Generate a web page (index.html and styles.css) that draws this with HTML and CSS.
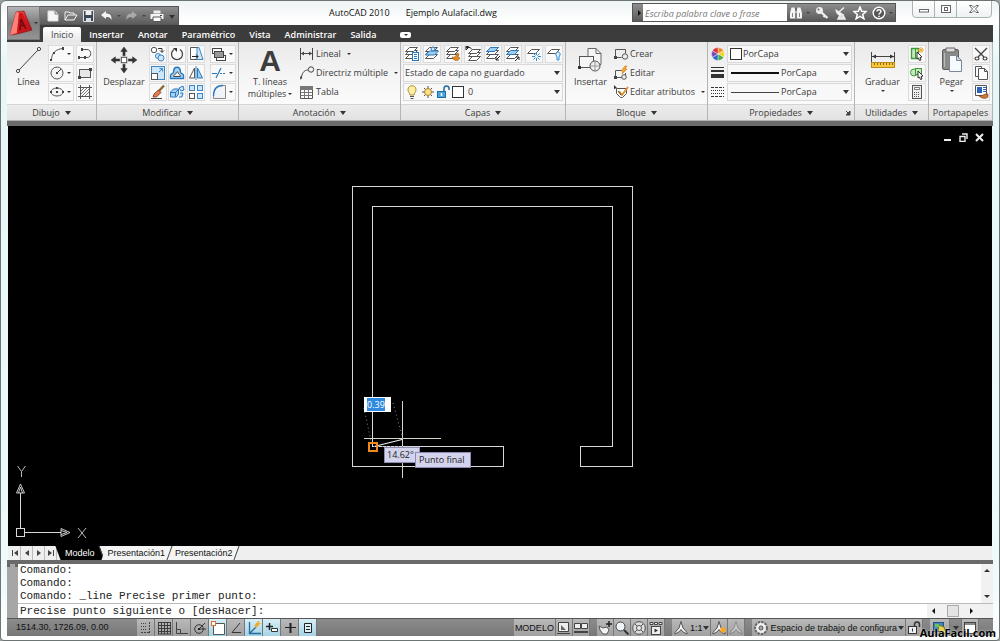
FILE: index.html
```
<!DOCTYPE html>
<html lang="es">
<head>
<meta charset="utf-8">
<title>AutoCAD 2010 - Ejemplo Aulafacil.dwg</title>
<link rel="stylesheet" href="styles.css">
</head>
<body>
<svg class="defs" aria-hidden="true">
  <defs>
    <linearGradient id="red" x1="0" y1="0" x2="1" y2="1"><stop offset="0" stop-color="#ff6a60"/><stop offset=".5" stop-color="#dd2022"/><stop offset="1" stop-color="#9c0c12"/></linearGradient>
    <symbol id="logo" viewBox="0 0 24 28"><path d="M1 26 7 3l8-1 8 19-7 2-8 2z" fill="url(#red)" stroke="#8f1015" stroke-width=".6"/><path d="M7 3l3 1-2 20-7 2z" fill="#ff8178"/><path d="M8 24l2-20 3 0 8 17z" fill="#c9161b"/><path d="M12 10l5 10M12 10l-1 11M11.500 16.500h4" fill="none" stroke="#6b090d" stroke-width="1.500"/></symbol>
    <symbol id="new" viewBox="0 0 14 12"><path d="M2 1h7l3 3v7H2z" fill="#f6f6f6" stroke="#ddd"/><path d="M9 1v3h3" fill="none" stroke="#777"/></symbol>
    <symbol id="open" viewBox="0 0 14 12"><path d="M1 10V2h4l1 1h4v2" fill="none" stroke="#eee"/><path d="M1 10l3-5h9l-3 5z" fill="#777" stroke="#f6f6f6"/></symbol>
    <symbol id="save" viewBox="0 0 14 12"><path d="M1.500.5h10v11h-10z" fill="#3b4656" stroke="#dfe3e8"/><path d="M3.500 1h6v4h-6z" fill="#eee"/><path d="M4 8h5v3H4z" fill="#ddd"/></symbol>
    <symbol id="undo" viewBox="0 0 14 12"><path d="M1 5l5-4v2.500c4 0 6 2 5.500 6.500-1-2.500-2.500-3-5.500-3V9z" fill="#f4f4f4"/></symbol>
    <symbol id="redo" viewBox="0 0 14 12"><path d="M12 5L7 1v2.500C3 3.500 1 5.500 1.500 10 2.500 7.500 4 7 7 7v2z" fill="#aaa"/></symbol>
    <symbol id="print" viewBox="0 0 14 12"><path d="M3.500.5h7v3h-7z" fill="#eee"/><path d="M.5 4h13v5H.5z" fill="#f4f4f4"/><path d="M3 7h8v4.500H3z" fill="#fff" stroke="#555"/><path d="M10 5.500h2" stroke="#444"/></symbol>
    <symbol id="binoc" viewBox="0 0 14 14"><path d="M2.500 1.500h3L6.500 5v7.500H1V7zM8.500 1.500h3L13 7v5.500H7.500V5z" fill="#f4f4f4"/><path d="M3.500 7v4M10.500 7v4" stroke="#888"/><path d="M7 2v10" stroke="#555"/><path d="M6 6h2" stroke="#eee"/></symbol>
    <symbol id="key" viewBox="0 0 14 14"><circle cx="4.500" cy="4.500" r="3.500" fill="#eee"/><circle cx="3.500" cy="3.500" r="1" fill="#666"/><path d="M6 6l6.500 6M10 9.500l-1.500 1.500" stroke="#eee" stroke-width="2.300"/></symbol>
    <symbol id="dish" viewBox="0 0 14 14"><path d="M1.500 3c0 6 4 8 9 6z" fill="#eee"/><path d="M5 6l5-4.500M6 9l-2 4h7L9 9" fill="#ddd" stroke="#eee" stroke-width="1.500"/></symbol>
    <symbol id="star" viewBox="0 0 14 14"><path d="M7 1l1.700 4.200 4.500.3-3.500 2.900 1.200 4.400L7 10.400l-3.900 2.400 1.200-4.400L.8 5.500l4.500-.3z" fill="#777" stroke="#fff" stroke-width="1.500"/></symbol>
    <symbol id="help" viewBox="0 0 14 14"><circle cx="7" cy="7" r="5.800" fill="#555" stroke="#fff" stroke-width="1.400"/><path d="M5 5.500c0-2.500 4-2.500 4 0C9 7 7 7 7 8.500M7 9.700v1.300" fill="none" stroke="#fff" stroke-width="1.500"/></symbol>
    <symbol id="w-min" viewBox="0 0 12 10"><rect x="1.500" y="5.500" width="9" height="2.500" fill="#fff" stroke="#666"/></symbol>
    <symbol id="w-max" viewBox="0 0 12 10"><rect x="1.500" y="1.500" width="9" height="7" fill="#fff" stroke="#666"/><rect x="4.500" y="3.500" width="3" height="3" fill="none" stroke="#666"/></symbol>
    <symbol id="w-close" viewBox="0 0 12 10"><path d="M1.500 1.500h2.500l2 2 2-2h2.500L7.500 5l3 3.500H8l-2-2-2 2H1.500l3-3.500z" fill="#fff" stroke="#666"/></symbol>

    <symbol id="line" viewBox="0 0 28 28"><path d="M4 24L23 4" stroke="#444"/><circle cx="3" cy="25" r="1.600" fill="#fff" stroke="#444"/><circle cx="24" cy="3" r="1.600" fill="#fff" stroke="#444"/></symbol>
    <symbol id="arc" viewBox="0 0 16 16"><path d="M2.500 14C2.500 7 7 3 14 2.500" fill="none" stroke="#555"/><path d="M1 13h2v2H1zM13 1h2v3h-2zM4 6h2v2H4z" fill="#444"/></symbol>
    <symbol id="circle" viewBox="0 0 16 16"><circle cx="8" cy="8" r="6" fill="#f4f4f4" stroke="#555"/><path d="M8 8l4-4" stroke="#333"/><path d="M7 7h2v2H7z" fill="#444"/></symbol>
    <symbol id="ellipse" viewBox="0 0 16 16"><ellipse cx="8" cy="8" rx="6" ry="4" fill="#f4f4f4" stroke="#555"/><path d="M7 7h2v2H7zM1 7h2v2H1zM13 7h2v2h-2zM7 3h2v2H7z" fill="#444"/></symbol>
    <symbol id="pline" viewBox="0 0 16 16"><path d="M4 3.500h6c5 0 5 8 0 8H8M2 11.500h5" fill="none" stroke="#555"/><path d="M4 2h2v3H4zM1 10h2v3H1zM7 10h2v3H7z" fill="#444"/></symbol>
    <symbol id="rect" viewBox="0 0 16 16"><rect x="2.500" y="4.500" width="11" height="8" fill="#e6e6e6" stroke="#555"/><path d="M1 11h3v3H1zM12 3h3v3h-3z" fill="#444"/></symbol>
    <symbol id="hatch" viewBox="0 0 16 16"><path d="M3.500 1v14M12.500 1v14M1 3.500h14M1 12.500h14" stroke="#555"/><path d="M4 7l3-3M4 10l6-6M5 12l7-7M8 12l4-4" stroke="#555" stroke-width=".8"/></symbol>
    <symbol id="move" viewBox="0 0 26 26"><path d="M13 1l3 4h-2v4h-2V5h-2zM13 25l3-4h-2v-4h-2v4h-2zM1 13l4-3v2h4v2H5v2zM25 13l-4-3v2h-4v2h4v2z" fill="#333" stroke="#333" stroke-width=".5"/><rect x="10.500" y="10.500" width="5" height="5" fill="#fff" stroke="#555"/></symbol>
    <symbol id="copy" viewBox="0 0 16 16"><circle cx="4" cy="4" r="2.700" fill="#fff" stroke="#555"/><circle cx="8" cy="10" r="2.500" fill="#cde6fa" stroke="#3b86c4"/><circle cx="11" cy="12" r="3" fill="#cde6fa" stroke="#3b86c4"/><path d="M8 2.500h4V6M10 4.500l2 2 2-2" fill="none" stroke="#333"/></symbol>
    <symbol id="rotate" viewBox="0 0 16 16"><path d="M5 3.500a5.500 5.500 0 1 0 6 0" fill="none" stroke="#444" stroke-width="1.300"/><path d="M4 2h4v4z" fill="#333"/></symbol>
    <symbol id="stretch" viewBox="0 0 16 16"><path d="M2.500 1.500h7v12h-7z" fill="#fff" stroke="#555"/><path d="M9 1.500h2l4 12H9z" fill="#cde6fa" stroke="#3b86c4"/><path d="M4 10.500h6M8 8.500l2 2-2 2" fill="none" stroke="#222"/></symbol>
    <symbol id="offsetc" viewBox="0 0 16 16"><rect x="1.500" y="1.500" width="13" height="13" fill="#cde6fa" stroke="#3b86c4"/><rect x="1.500" y="8.500" width="6" height="6" fill="#fff" stroke="#555"/><path d="M9 7l3-3M9.500 3.500h3v3" fill="none" stroke="#3b86c4"/></symbol>
    <symbol id="offset" viewBox="0 0 16 16"><path d="M1.500 13.500v-3c0-2 3-2 3-3 0-7 7-7 7 0 0 1 3 1 3 3v3z" fill="#a8d2f4" stroke="#2878bd" stroke-width="1.400"/><path d="M4.500 11.500c0-2 2.500-2 2.500-3 0-2 2.500-2 2.500 0 0 1 2 1 2 3z" fill="#fff" stroke="#444"/></symbol>
    <symbol id="mirror" viewBox="0 0 16 16"><path d="M6.500 3v10h-5z" fill="#fff" stroke="#555"/><path d="M9.500 3v10h5z" fill="#a8d2f4" stroke="#2878bd"/><path d="M8 1v14" stroke="#3b86c4"/></symbol>
    <symbol id="erase" viewBox="0 0 16 16"><path d="M14 1.500L8 8" stroke="#8a6a3a" stroke-width="2.500"/><path d="M8.500 6l2.500 2.500L6.500 13H3l1-3z" fill="#e9794f" stroke="#6d3a1c" stroke-width=".8"/><path d="M1 14.500h11" stroke="#444"/></symbol>
    <symbol id="explode" viewBox="0 0 16 16"><path d="M1.500 8l3-3h5v5l-2 3h-6z" fill="#a8d2f4" stroke="#2878bd"/><path d="M1.500 8.500h5v4M6.500 8.500l3-3" fill="none" stroke="#2878bd"/><path d="M10 4l4-2 1 4-3 1zM11 9l3 0-1 4-3 0" fill="#cde6fa" stroke="#2878bd"/></symbol>
    <symbol id="array" viewBox="0 0 16 16"><g stroke="#3b86c4" fill="#cde6fa"><rect x="1.500" y="1.500" width="5" height="5"/><rect x="9.500" y="1.500" width="5" height="5"/><rect x="9.500" y="9.500" width="5" height="5"/></g><rect x="1.500" y="9.500" width="5" height="5" fill="#fff" stroke="#555"/></symbol>
    <symbol id="order" viewBox="0 0 16 16"><g stroke="#444"><rect x="1.500" y="2.500" width="9" height="5" fill="#fff"/><rect x="5.500" y="9.500" width="9" height="5" fill="#fff"/><rect x="3.500" y="5.500" width="9" height="6" fill="#999"/></g></symbol>
    <symbol id="trim" viewBox="0 0 16 16"><path d="M1 8.500h5M5 13l5-10" stroke="#2878bd" stroke-width="1.200"/><path d="M9 8.500h6" stroke="#2878bd" stroke-dasharray="2 1"/></symbol>
    <symbol id="fillet" viewBox="0 0 16 16"><path d="M2.500 14.500V12C2.500 5 6 1.500 11 1.500h3.500v13z" fill="#f0f4f8" stroke="#888"/><path d="M2.500 12C2.500 5 6 1.500 12 1.500" fill="none" stroke="#2878bd" stroke-width="1.300"/></symbol>
    <symbol id="dim" viewBox="0 0 16 16"><path d="M1.500 2v12M13.500 2v12M2 7.500h11" stroke="#444"/><path d="M2 7.500l3-2v4zM13 7.500l-3-2v4z" fill="#444"/></symbol>
    <symbol id="leader" viewBox="0 0 16 16"><path d="M2 14C3 8 5 5 9 5" fill="none" stroke="#444"/><circle cx="12" cy="4.500" r="2.700" fill="none" stroke="#444"/><path d="M1 15l.5-4 2 1z" fill="#444"/></symbol>
    <symbol id="table" viewBox="0 0 16 16"><path d="M1.500 2.500h12v12h-12z" fill="#fff" stroke="#555"/><path d="M1 2h13v4H1z" fill="#777"/><path d="M1.500 8.500h12M1.500 11.500h12M5.500 6v8M9.500 6v8" stroke="#777"/></symbol>
    <symbol id="layers" viewBox="0 0 16 16"><g fill="#fff" stroke="#555"><path d="M1.500 12.500l4-4h8l-4 4z"/><path d="M1.500 8.500l4-4h8l-4 4z"/><path d="M1.500 5.500l4-4h8l-4 4z"/></g></symbol>
    <symbol id="lay1" viewBox="0 0 16 16"><use href="#layers"/><rect x="8.500" y="6.500" width="6" height="8" fill="#fff" stroke="#2878bd"/><path d="M10 8.500h3M10 10.500h3M10 12.500h3" stroke="#2878bd"/></symbol>
    <symbol id="lay2" viewBox="0 0 16 16"><use href="#layers"/><path d="M1.500 9l4-4h9l-4 4z" fill="#9fcdf2" stroke="#2878bd"/><circle cx="9" cy="3" r="2" fill="#cde6fa" stroke="#2878bd"/></symbol>
    <symbol id="lay3" viewBox="0 0 16 16"><use href="#layers"/><path d="M7 11c3 1 4-1 5-4l2 1-1 3 2 1c-1 3-6 4-8-1z" fill="#e08a28" stroke="#9a5510" stroke-width=".6"/></symbol>
    <symbol id="lay4" viewBox="0 0 16 16"><g transform="translate(2 2)"><use href="#layers" width="16" height="16"/></g><path d="M1 1.500h3c2 0 2 1 3 2M1 0v4l3-3z" fill="none" stroke="#222"/></symbol>
    <symbol id="lay5" viewBox="0 0 16 16"><use href="#layers"/><path d="M1.500 5.500l4-4h8l-4 4z" fill="#9fcdf2" stroke="#2878bd"/><path d="M15 10l-4 4M11 11v3h3" fill="none" stroke="#222"/></symbol>
    <symbol id="lay6" viewBox="0 0 16 16"><use href="#layers"/><path d="M1.500 8.500l4-4h8l-4 4z" fill="#9fcdf2" stroke="#2878bd"/><path d="M10 15l4-4M11 11h3v3" fill="none" stroke="#222"/></symbol>
    <symbol id="lay7" viewBox="0 0 16 16"><path d="M1.500 7.500l4-4h8l-4 4z" fill="#fff" stroke="#555"/><path d="M10.500 6v9M6 10.500h9M7.500 7.500l6 6M13.500 7.500l-6 6" stroke="#2f8bd6"/><circle cx="10.500" cy="10.500" r="1.500" fill="#fff"/></symbol>
    <symbol id="lay8" viewBox="0 0 16 16"><path d="M1.500 7.500l4-4h8l-4 4z" fill="#fff" stroke="#555"/><path d="M10 9c-1-4 5-4 4 0l-1 2v3h-2v-3z" fill="#e4f2fd" stroke="#2f8bd6"/></symbol>
    <symbol id="bulb" viewBox="0 0 16 16"><path d="M6 11c0-2-2-2.500-2-5.500 0-5 8-5 8 0C12 8.500 10 9 10 11z" fill="#fdf0a0" stroke="#a88c38"/><path d="M6 12.500h4M6.500 14.500h3" stroke="#555"/></symbol>
    <symbol id="sun" viewBox="0 0 16 16"><path d="M8 2v12M2 8h12M4 4l8 8M12 4l-8 8" stroke="#555"/><circle cx="8" cy="8" r="3.500" fill="#fbe08a" stroke="#a88430"/></symbol>
    <symbol id="lock" viewBox="0 0 16 16"><rect x="1.500" y="7.500" width="8" height="6" fill="#4aa3da" stroke="#1c6ca6"/><path d="M8 7V4.500c0-3.500 5-3.500 5 0V6" fill="none" stroke="#1c6ca6" stroke-width="1.500"/><path d="M5.500 9v3" stroke="#fff" stroke-width="1.500"/></symbol>
    <symbol id="insert" viewBox="0 0 28 28"><path d="M12 10V2.500h8l5 5v11h-4" fill="#f6f6f6" stroke="#666"/><path d="M20 2.500v5h5" fill="none" stroke="#666"/><rect x="3.500" y="10.500" width="14" height="11" fill="#f6f6f6" stroke="#555"/><circle cx="19" cy="20" r="5" fill="#eee" stroke="#555"/><path d="M2 20h3v3H2z" fill="#333"/><path d="M19 16v8M15 20h8" stroke="#999"/></symbol>
    <symbol id="create" viewBox="0 0 16 16"><path d="M2.500 11.500v-8h10v4M2.500 11.500h6" fill="none" stroke="#555"/><circle cx="12" cy="10.500" r="2.700" fill="#eee" stroke="#555"/><path d="M1 10h3v3H1z" fill="#444"/></symbol>
    <symbol id="edit" viewBox="0 0 16 16"><path d="M2.500 12.500v-7h6M2.500 12.500h7M12.500 8v2" fill="none" stroke="#555"/><circle cx="11" cy="12" r="2.300" fill="#eee" stroke="#555"/><path d="M12 1L8 6h2L9 9l5-5h-2l2-3z" fill="#f7a823" stroke="#c76e10" stroke-width=".5"/><path d="M1 11h3v3H1z" fill="#444"/></symbol>
    <symbol id="attr" viewBox="0 0 16 16"><path d="M3.500 4.500h10v5l-4 4h-2l-4-4z" fill="#fff" stroke="#555"/><path d="M1 1v4l3-1z" fill="#333"/><path d="M6 7l3 4 6-8" fill="none" stroke="#e08a28" stroke-width="1.800"/><path d="M5 7l3 4" stroke="#555"/></symbol>
    <symbol id="wheel" viewBox="0 0 16 16"><g stroke="#fff" stroke-width=".4"><path d="M8 8V1.500a6.500 6.500 0 0 1 5.600 3.200z" fill="#f08a24"/><path d="M8 8l5.600-3.300a6.500 6.500 0 0 1 0 6.600z" fill="#f3d52b"/><path d="M8 8l5.600 3.300A6.500 6.500 0 0 1 8 14.500z" fill="#49a84a"/><path d="M8 8v6.500a6.500 6.500 0 0 1-5.600-3.200z" fill="#2b6fc7"/><path d="M8 8l-5.600 3.300a6.500 6.500 0 0 1 0-6.600z" fill="#7a4bb5"/><path d="M8 8L2.400 4.700A6.500 6.500 0 0 1 8 1.500z" fill="#d8343c"/></g></symbol>
    <symbol id="weights" viewBox="0 0 16 16"><path d="M1 2.500h13" stroke="#333"/><path d="M1 6h13" stroke="#333" stroke-width="2"/><path d="M1 11h13" stroke="#333" stroke-width="4"/></symbol>
    <symbol id="types" viewBox="0 0 16 16"><path d="M1 3.500h13M1 12.500h13" stroke="#333" stroke-dasharray="3 1"/><path d="M1 6.500h13M1 9.500h13" stroke="#333" stroke-dasharray="1 1"/></symbol>
    <symbol id="measure" viewBox="0 0 28 28"><path d="M2.500 6v10M25.500 6v10M3 10.500h22" stroke="#444"/><path d="M3 10.500l4-2v4zM25 10.500l-4-2v4z" fill="#333"/><rect x="2.500" y="16.500" width="23" height="5" fill="#f6c83a" stroke="#b98a1e"/><path d="M5.500 17v2M8.500 17v2M11.500 17v2M14.500 17v2M17.500 17v2M20.500 17v2M23.500 17v2" stroke="#8b6510"/></symbol>
    <symbol id="qsel" viewBox="0 0 16 16"><path d="M2.500 2.500h7v10h-7z" fill="#c3e8bc" stroke="#3c9a3c" stroke-width="1.300"/><path d="M6.500 3v9" stroke="#3c9a3c"/><path d="M12 1v6M9 4h6M10 2l4 4M14 2l-4 4" stroke="#f0a830"/><path d="M8 6l5 5-2 .5 1 2.500-1.500.5-1-2.500L8 13z" fill="#fff" stroke="#333"/></symbol>
    <symbol id="gsel" viewBox="0 0 16 16"><circle cx="5" cy="7.500" r="3.500" fill="#c3e8bc" stroke="#3c9a3c"/><rect x="6.500" y="3.500" width="6" height="6" fill="#c3e8bc" stroke="#3c9a3c"/><path d="M9 6l5 5-2 .5 1 2.500-1.500.5-1-2.500L9 13z" fill="#fff" stroke="#333"/></symbol>
    <symbol id="calc" viewBox="0 0 16 16"><rect x="3.500" y="1.500" width="9" height="13" fill="#eee" stroke="#555"/><path d="M5.500 3.500h5v2h-5z" fill="#fff" stroke="#777"/><path d="M5 8.500h6M5 10.500h6M5 12.500h6" stroke="#555" stroke-dasharray="1 1"/></symbol>
    <symbol id="paste" viewBox="0 0 28 28"><rect x="4.500" y="3.500" width="16" height="20" rx="1.500" fill="#8b8b87" stroke="#5d5d5a"/><path d="M8 2h9v4H8z" fill="#ddd" stroke="#666"/><path d="M6.500 7v14" stroke="#bbb"/><path d="M11.500 9.500h7l5 5v11h-12z" fill="#f7fafd" stroke="#7c8794"/><path d="M18.500 9.500v5h5z" fill="#cfdae6" stroke="#7c8794"/></symbol>
    <symbol id="cut" viewBox="0 0 16 16"><path d="M2 2l9 9M14 2L5 11" stroke="#444" stroke-width="1.400"/><ellipse cx="4" cy="12.500" rx="2" ry="1.500" fill="none" stroke="#444" stroke-width="1.200"/><ellipse cx="12" cy="12.500" rx="2" ry="1.500" fill="none" stroke="#444" stroke-width="1.200"/></symbol>
    <symbol id="copyclip" viewBox="0 0 16 16"><path d="M2.500 11.500v-10h6v2" fill="#fff" stroke="#555"/><path d="M2.500 11.500h3" stroke="#555"/><path d="M5.500 3.500h6l3 3v8h-9z" fill="#fff" stroke="#555"/><path d="M11.500 3.500v3h3" fill="none" stroke="#555"/></symbol>
    <symbol id="match" viewBox="0 0 16 16"><path d="M2.500 1.500h11v10h-11z" fill="#fff" stroke="#555"/><path d="M4 3h5v6H4z" fill="#2865b8"/><path d="M10 3.500h3M10 5.500h3M10 7.500h3" stroke="#2865b8"/><path d="M6 12c3 1 5-3 9-2v3c-2 2-6 2-9-1z" fill="#c9763a" stroke="#7d4216" stroke-width=".6"/></symbol>

    <symbol id="s-snap" viewBox="0 0 16 16"><path d="M3 3.500h6M3 6.500h6M3 9.500h6" stroke="#444" stroke-dasharray="1 1"/><path d="M11.500 2v11M3 12.500h9" stroke="#444" stroke-dasharray="2 1"/></symbol>
    <symbol id="s-grid" viewBox="0 0 16 16"><path d="M2.500 2v12M5.500 2v12M8.500 2v12M11.500 2v12M14.500 2v12M2 2.500h13M2 5.500h13M2 8.500h13M2 11.500h13M2 14h13" stroke="#333" stroke-width=".9"/></symbol>
    <symbol id="s-ortho" viewBox="0 0 16 16"><path d="M2.500 2v11.500H14M2.500 9.500h4v4" fill="none" stroke="#444"/></symbol>
    <symbol id="s-polar" viewBox="0 0 16 16"><circle cx="7" cy="9" r="4.300" fill="none" stroke="#333"/><path d="M7 9l6-6M7 9h7" stroke="#333"/><path d="M6 8h2v2H6z" fill="#222"/></symbol>
    <symbol id="s-osnap" viewBox="0 0 16 16"><path d="M3.500 3.500h11v11h-11z" fill="#fff" stroke="#555"/><rect x="1.500" y="1.500" width="4" height="4" fill="#fff" stroke="#e86c30"/></symbol>
    <symbol id="s-otrack" viewBox="0 0 16 16"><path d="M12 3L4 12.500h9" fill="none" stroke="#333"/></symbol>
    <symbol id="s-ducs" viewBox="0 0 16 16"><path d="M3.500 2v11.500H15M4 13l6-6" fill="none" stroke="#276a9c" stroke-width="1.300"/><path d="M12 1L8 6h2l-1 3 6-6h-3l2-2z" fill="#f7a823"/></symbol>
    <symbol id="s-dyn" viewBox="0 0 16 16"><path d="M2 6.500h7M5.500 3v7" stroke="#222" stroke-width="1.500"/><path d="M7.500 8.500h6v3h-6z" fill="#fff" stroke="#333"/></symbol>
    <symbol id="s-lwt" viewBox="0 0 16 16"><path d="M3 7.500h11" stroke="#222"/><path d="M8.500 3v10" stroke="#222" stroke-width="2"/></symbol>
    <symbol id="s-qp" viewBox="0 0 16 16"><path d="M4.500 3.500h7v9h-7z" fill="#dff1f8" stroke="#222"/><path d="M6 6.500h4M6 9.500h4" stroke="#222"/></symbol>
    <symbol id="s-model" viewBox="0 0 16 16"><path d="M2.500 2.500h10v9h-10z" fill="#eee" stroke="#444"/><path d="M5 5v5h5z" fill="#666"/><path d="M1 13.500h13" stroke="#444"/></symbol>
    <symbol id="s-lays" viewBox="0 0 16 16"><path d="M1.500 3.500h6v5h-6zM8.500 3.500h6v5h-6z" fill="#eee" stroke="#444"/><path d="M1 12h14" stroke="#444" stroke-width="2"/></symbol>
    <symbol id="s-pan" viewBox="0 0 16 16"><path d="M2 6l4 2 4-1 2 3-2 4H6L3 10z" fill="#f4f4f4" stroke="#555"/><path d="M12 1v6M9 4h6" stroke="#222" stroke-width="1.500"/></symbol>
    <symbol id="s-zoom" viewBox="0 0 16 16"><circle cx="6.500" cy="6.500" r="4.500" fill="#eef4f8" stroke="#444"/><path d="M10 10l4.500 4.500" stroke="#333" stroke-width="2"/></symbol>
    <symbol id="s-wheel" viewBox="0 0 16 16"><circle cx="8" cy="8" r="6.300" fill="#ddd" stroke="#555"/><circle cx="8" cy="8" r="2.500" fill="#eee" stroke="#555"/><path d="M4 4l2 2M12 4l-2 2M4 12l2-2M12 12l-2-2" stroke="#555"/></symbol>
    <symbol id="s-motion" viewBox="0 0 16 16"><rect x="3.500" y="6.500" width="9" height="8" fill="#eee" stroke="#444"/><path d="M6.500 8.500v4l3.500-2z" fill="#333"/><path d="M2 2.500h3v2H2zM6.500 2.500h3v2h-3zM11 2.500h3v2h-3z" fill="#eee" stroke="#444"/></symbol>
    <symbol id="s-anno" viewBox="0 0 16 16"><path d="M8 1.500l2 6.500 4 4.500v1.500l-4.500-2.500L8 9.500l-1.500 2L2 14v-1.500L6 8z" fill="#f4f4f4" stroke="#444" stroke-width=".9"/></symbol>
    <symbol id="s-anno2" viewBox="0 0 16 16"><use href="#s-anno"/><circle cx="12" cy="10" r="2.700" fill="#f7a823"/></symbol>
    <symbol id="s-gear" viewBox="0 0 16 16"><circle cx="8" cy="8" r="5.700" fill="#eee" stroke="#666" stroke-width="2.500" stroke-dasharray="2.300 1"/><circle cx="8" cy="8" r="5" fill="#eee"/><circle cx="8" cy="8" r="2" fill="#aaa" stroke="#555"/></symbol>
    <symbol id="s-lock" viewBox="0 0 16 16"><rect x="2.500" y="6.500" width="8" height="7" fill="#eee" stroke="#333"/><path d="M8.500 6V4.500c0-3.500 5-3.500 5 0V7" fill="none" stroke="#333" stroke-width="1.500"/><path d="M6.500 8.500v3" stroke="#333"/></symbol>
    <symbol id="s-hw" viewBox="0 0 16 16"><rect x="1.500" y="2.500" width="10" height="9" fill="#4583c4" stroke="#27517d"/><path d="M7 5l5 2 2 6-5 1-3-4z" fill="#e9d04a" stroke="#5b7d2a"/><path d="M3 4h4v3H3z" fill="#6cc05a"/></symbol>
    <symbol id="s-clean" viewBox="0 0 16 16"><rect x="2.500" y="2.500" width="11" height="11" fill="#fff" stroke="#444"/><path d="M3 4h10" stroke="#888" stroke-width="2"/></symbol>
  </defs>
</svg>

<div class="window">
  <header class="titlebar">
    <div class="qat">
      <button aria-label="Nuevo"><svg><use href="#new"/></svg></button>
      <button aria-label="Abrir"><svg><use href="#open"/></svg></button>
      <button aria-label="Guardar"><svg><use href="#save"/></svg></button>
      <button class="with-caret" aria-label="Deshacer"><svg><use href="#undo"/></svg><i class="caret dim"></i></button>
      <button class="with-caret" aria-label="Rehacer"><svg><use href="#redo"/></svg><i class="caret dim"></i></button>
      <button aria-label="Imprimir"><svg><use href="#print"/></svg></button>
      <button class="more" aria-label="Personalizar"><i class="caret big"></i></button>
    </div>
    <h1 class="title"><span>AutoCAD 2010</span><span>Ejemplo Aulafacil.dwg</span></h1>
    <div class="info">
      <button class="info-toggle" aria-label="Contraer"><i class="caret right"></i></button>
      <input type="search" aria-label="Buscar" placeholder="Escriba palabra clave o frase">
      <div class="info-icons">
        <button class="with-caret" aria-label="Buscar"><svg><use href="#binoc"/></svg><i class="caret dim"></i></button>
        <button aria-label="Suscripción"><svg><use href="#key"/></svg></button>
        <button aria-label="Comunicaciones"><svg><use href="#dish"/></svg></button>
        <button aria-label="Favoritos"><svg><use href="#star"/></svg></button>
        <button class="with-caret" aria-label="Ayuda"><svg><use href="#help"/></svg><i class="caret dim"></i></button>
      </div>
    </div>
    <div class="controls">
      <button aria-label="Minimizar"><svg><use href="#w-min"/></svg></button>
      <button aria-label="Restaurar"><svg><use href="#w-max"/></svg></button>
      <button aria-label="Cerrar"><svg><use href="#w-close"/></svg></button>
    </div>
  </header>
  <button class="app" aria-label="Menú de la aplicación"><svg><use href="#logo"/></svg><i class="caret"></i></button>

  <nav class="tabs">
    <button class="active">Inicio</button><button>Insertar</button><button>Anotar</button><button>Paramétrico</button><button>Vista</button><button>Administrar</button><button>Salida</button>
    <button class="pill" aria-label="Minimizar cinta"><span><i class="caret"></i></span></button>
  </nav>

  <div class="ribbon">
    <section class="panel">
      <div class="body">
        <button class="large"><svg class="i28"><use href="#line"/></svg>Línea</button>
        <div class="tools two">
          <button class="split" aria-label="Arco"><svg><use href="#arc"/></svg><i class="caret"></i></button>
          <button aria-label="Polilínea"><svg><use href="#pline"/></svg></button>
          <button class="split" aria-label="Círculo"><svg><use href="#circle"/></svg><i class="caret"></i></button>
          <button aria-label="Rectángulo"><svg><use href="#rect"/></svg></button>
          <button class="split" aria-label="Elipse"><svg><use href="#ellipse"/></svg><i class="caret"></i></button>
          <button aria-label="Sombreado"><svg><use href="#hatch"/></svg></button>
        </div>
      </div>
      <h2>Dibujo <i class="caret big"></i></h2>
    </section>

    <section class="panel">
      <div class="body">
        <button class="large"><svg class="i28"><use href="#move"/></svg>Desplazar</button>
        <div class="tools four">
          <button aria-label="Copiar"><svg><use href="#copy"/></svg></button>
          <button aria-label="Girar"><svg><use href="#rotate"/></svg></button>
          <button aria-label="Estirar"><svg><use href="#stretch"/></svg></button>
          <button class="split" aria-label="Orden"><svg><use href="#order"/></svg><i class="caret"></i></button>
          <button aria-label="Escala"><svg><use href="#offsetc"/></svg></button>
          <button aria-label="Desfase"><svg><use href="#offset"/></svg></button>
          <button aria-label="Simetría"><svg><use href="#mirror"/></svg></button>
          <button class="split" aria-label="Recortar"><svg><use href="#trim"/></svg><i class="caret"></i></button>
          <button aria-label="Borrar"><svg><use href="#erase"/></svg></button>
          <button aria-label="Descomponer"><svg><use href="#explode"/></svg></button>
          <button aria-label="Matriz"><svg><use href="#array"/></svg></button>
          <button class="split" aria-label="Empalme"><svg><use href="#fillet"/></svg><i class="caret"></i></button>
        </div>
      </div>
      <h2>Modificar <i class="caret big"></i></h2>
    </section>

    <section class="panel">
      <div class="body">
        <button class="large text"><b>A</b><span>T. líneas</span><span class="last-line">múltiples<i class="caret"></i></span></button>
        <div class="list">
          <button><svg><use href="#dim"/></svg>Lineal<i class="caret far"></i></button>
          <button><svg><use href="#leader"/></svg>Directriz múltiple<i class="caret far"></i></button>
          <button><svg><use href="#table"/></svg>Tabla</button>
        </div>
      </div>
      <h2>Anotación <i class="caret big"></i></h2>
    </section>

    <section class="panel">
      <div class="body stack">
        <div class="strip">
          <button aria-label="Propiedades de capa"><svg><use href="#lay1"/></svg></button>
          <button aria-label="Definir actual"><svg><use href="#lay2"/></svg></button>
          <button aria-label="Igualar"><svg><use href="#lay3"/></svg></button>
          <button aria-label="Capa previa"><svg><use href="#lay4"/></svg></button>
          <button aria-label="Aislar"><svg><use href="#lay5"/></svg></button>
          <button aria-label="Desaislar"><svg><use href="#lay6"/></svg></button>
          <button aria-label="Inutilizar"><svg><use href="#lay7"/></svg></button>
          <button aria-label="Desactivar"><svg><use href="#lay8"/></svg></button>
        </div>
        <div class="combo"><select aria-label="Estado de capa"><option>Estado de capa no guardado</option></select><i class="caret big"></i></div>
        <div class="combo layer">
          <span class="lead"><svg><use href="#bulb"/></svg><svg><use href="#sun"/></svg><svg><use href="#lock"/></svg><i class="swatch"></i></span>
          <select aria-label="Capa"><option>0</option></select><i class="caret big"></i>
        </div>
      </div>
      <h2>Capas <i class="caret big"></i></h2>
    </section>

    <section class="panel">
      <div class="body">
        <button class="large"><svg class="i28"><use href="#insert"/></svg>Insertar</button>
        <div class="list">
          <button><svg><use href="#create"/></svg>Crear</button>
          <button><svg><use href="#edit"/></svg>Editar</button>
          <button><svg><use href="#attr"/></svg>Editar atributos<i class="caret far"></i></button>
        </div>
      </div>
      <h2>Bloque <i class="caret big"></i></h2>
    </section>

    <section class="panel">
      <div class="body stack props">
        <div class="prop"><svg><use href="#wheel"/></svg><div class="combo color"><i class="swatch"></i><select aria-label="Color"><option>PorCapa</option></select><i class="caret big"></i></div></div>
        <div class="prop"><svg><use href="#weights"/></svg><div class="combo ruled thick"><select aria-label="Grosor de línea"><option>PorCapa</option></select><i class="caret big"></i></div></div>
        <div class="prop"><svg><use href="#types"/></svg><div class="combo ruled"><select aria-label="Tipo de línea"><option>PorCapa</option></select><i class="caret big"></i></div></div>
      </div>
      <h2>Propiedades <i class="caret big"></i><svg class="launch" viewBox="0 0 6 6"><path d="M1 1l3 3M5 1v4H1z" fill="#444" stroke="#444"/></svg></h2>
    </section>

    <section class="panel">
      <div class="body">
        <button class="large"><svg class="i28"><use href="#measure"/></svg>Graduar<i class="caret"></i></button>
        <div class="tools one">
          <button aria-label="Seleccionar todo"><svg><use href="#qsel"/></svg></button>
          <button aria-label="Selección rápida"><svg><use href="#gsel"/></svg></button>
          <button aria-label="Calculadora"><svg><use href="#calc"/></svg></button>
        </div>
      </div>
      <h2>Utilidades <i class="caret big"></i></h2>
    </section>

    <section class="panel">
      <div class="body">
        <button class="large"><svg class="i28"><use href="#paste"/></svg>Pegar<i class="caret"></i></button>
        <div class="tools one">
          <button aria-label="Cortar"><svg><use href="#cut"/></svg></button>
          <button aria-label="Copiar al portapapeles"><svg><use href="#copyclip"/></svg></button>
          <button aria-label="Igualar propiedades"><svg><use href="#match"/></svg></button>
        </div>
      </div>
      <h2>Portapapeles</h2>
    </section>
  </div>

  <main class="canvas">
    <svg class="drawing" shape-rendering="crispEdges">
      <g fill="none" stroke="#d8d8d8">
        <path d="M344.500 60.500h280v280h-52v-20h32v-240h-240v240h131v20h-151z"/>
        <path d="M394.500 275v77M356 312.500h77" stroke="#d6d6c8"/>
        <path d="M8.500 402.500h8v8h-8zM12.500 402v-35M17 406.500h36"/>
      </g>
      <g fill="none" stroke="#ddd" shape-rendering="geometricPrecision">
        <path d="M8.500 367l4-9 4 9zM53 402.500l9 4-9 4zM10.500 367l2-6 2 6M53 404.500l6 2-6 2" stroke-width=".9"/>
        <path d="M9.500 340l4 5.500 4-5.500M13.500 345.500v5.500M70 402l8 10M78 402l-8 10" stroke="#bbb"/>
        <path d="M366 320.500l28-7" stroke="#fff"/>
        <path d="M356 282l8 38M385 277l10 36M366 320.500h30" stroke="#888" stroke-dasharray="1 3"/>
      </g>
      <path d="M360.500 316.500h8v8h-8z" fill="none" stroke="#f08a1c" stroke-width="2"/>
    </svg>
    <input class="dyn" aria-label="Distancia" value="0.39">
    <output class="tip angle">14.62°</output>
    <output class="tip snap">Punto final</output>
    <div class="doc-controls">
      <button aria-label="Minimizar dibujo"><svg viewBox="0 0 9 9"><path d="M1 7h7" stroke="#eee" stroke-width="2"/></svg></button>
      <button aria-label="Restaurar dibujo"><svg viewBox="0 0 9 9"><path d="M3 1h5v5M1 3.500h5v5H1z" fill="none" stroke="#eee" stroke-width="1.400"/></svg></button>
      <button aria-label="Cerrar dibujo"><svg viewBox="0 0 9 9"><path d="M1 1l7 7M8 1L1 8" stroke="#eee" stroke-width="2"/></svg></button>
    </div>
  </main>

  <nav class="layouts">
    <button class="nav" aria-label="Primera"><svg viewBox="0 0 8 8"><path d="M1.500 1v6" stroke="#444"/><path d="M7 1v6L3 4z" fill="#444"/></svg></button>
    <button class="nav" aria-label="Anterior"><svg viewBox="0 0 8 8"><path d="M6 1v6L2 4z" fill="#444"/></svg></button>
    <button class="nav" aria-label="Siguiente"><svg viewBox="0 0 8 8"><path d="M2 1v6l4-3z" fill="#444"/></svg></button>
    <button class="nav" aria-label="Última"><svg viewBox="0 0 8 8"><path d="M6.500 1v6" stroke="#444"/><path d="M1 1v6l4-3z" fill="#444"/></svg></button>
    <button class="sheet current"><span>Modelo</span></button>
    <button class="sheet"><span>Presentación1</span></button>
    <button class="sheet"><span>Presentación2</span></button>
  </nav>

  <section class="command">
    <div class="grip"></div>
    <div class="console">
      <div class="history">
        <div class="log">Comando:<br>Comando:<br>Comando: _line Precise primer punto:</div>
        <div class="vscroll"><i class="caret up"></i><i class="caret down"></i></div>
      </div>
      <div class="prompt">
        <label for="cmd">Precise punto siguiente o [desHacer]:</label><input id="cmd">
        <div class="hscroll"><i class="caret left"></i><span></span><i class="caret right"></i></div>
      </div>
    </div>
  </section>

  <footer class="status">
    <output class="coords">1514.30, 1726.09, 0.00</output>
    <div class="group toggles">
      <button aria-label="Forzcursor"><svg><use href="#s-snap"/></svg></button>
      <button aria-label="Rejilla"><svg><use href="#s-grid"/></svg></button>
      <button aria-label="Orto"><svg><use href="#s-ortho"/></svg></button>
      <button aria-label="Polar"><svg><use href="#s-polar"/></svg></button>
      <button class="on" aria-label="Refent"><svg><use href="#s-osnap"/></svg></button>
      <button aria-label="Rastreo"><svg><use href="#s-otrack"/></svg></button>
      <button class="on" aria-label="SCP dinámico"><svg><use href="#s-ducs"/></svg></button>
      <button class="on" aria-label="Entrada dinámica"><svg><use href="#s-dyn"/></svg></button>
      <button aria-label="Grosor"><svg><use href="#s-lwt"/></svg></button>
      <button class="on" aria-label="Propiedades rápidas"><svg><use href="#s-qp"/></svg></button>
    </div>
    <div class="space"></div>
    <div class="group">
      <button class="wide">MODELO</button>
      <button aria-label="Presentaciones"><svg><use href="#s-model"/></svg></button>
      <button aria-label="Dibujos"><svg><use href="#s-lays"/></svg></button>
    </div>
    <div class="group">
      <button aria-label="Encuadre"><svg><use href="#s-pan"/></svg></button>
      <button aria-label="Zoom"><svg><use href="#s-zoom"/></svg></button>
      <button aria-label="Rueda"><svg><use href="#s-wheel"/></svg></button>
      <button aria-label="ShowMotion"><svg><use href="#s-motion"/></svg></button>
    </div>
    <div class="group">
      <button class="wide"><svg><use href="#s-anno"/></svg>1:1<i class="caret big"></i></button>
      <button aria-label="Visibilidad"><svg><use href="#s-anno2"/></svg></button>
      <button class="off" aria-label="Escala automática"><svg><use href="#s-anno"/></svg></button>
    </div>
    <div class="group">
      <button class="wide"><svg><use href="#s-gear"/></svg>Espacio de trabajo de configura<i class="caret big"></i></button>
      <button aria-label="Bloquear"><svg><use href="#s-lock"/></svg></button>
    </div>
    <div class="group">
      <button class="hw" aria-label="Hardware"><svg><use href="#s-hw"/></svg></button>
      <button class="slim" aria-label="Menú de estado"><i class="caret big"></i></button>
      <button aria-label="Limpiar pantalla"><svg><use href="#s-clean"/></svg></button>
    </div>
  </footer>
  <div class="mark">AulaFacil.com</div>
</div>
</body>
</html>
```
FILE: styles.css
```
* { box-sizing: border-box; }
body {
  margin: 0;
  background: #9aa0a0;
  color: #3c3c3c;
  font: 9px/12px "Open Sans", "Noto Sans", sans-serif;
}
button, input, select {
  margin: 0;
  padding: 0;
  border: 0;
  background: none;
  color: inherit;
  font: inherit;
  border-radius: 0;
}
h1, h2 { margin: 0; font: inherit; }
svg { display: block; flex: none; width: 16px; height: 16px; }
.defs { position: absolute; width: 0; height: 0; }

.caret {
  display: inline-block;
  flex: none;
  width: 0;
  height: 0;
  border: 2px solid transparent;
  border-top-color: #333;
  border-bottom-width: 0;
}
.caret.big { border-width: 4px 3px 0; }
.caret.down { border-width: 3px 3px 0; }
.caret.dim { border-top-color: #444; }
.caret.up { border-width: 0 3px 3px; border-bottom-color: #333; }
.caret.right { border-width: 3px 0 3px 3px; border-color: transparent transparent transparent #111; }
.caret.left { border-width: 3px 3px 3px 0; border-color: transparent #111 transparent transparent; }

.window {
  position: relative;
  display: flex;
  flex-direction: column;
  height: 100vh;
  padding: 0 6px 4px;
  border: 1px solid #6d7474;
  border-radius: 6px 6px 4px 4px;
  background: linear-gradient(#eef3f4, #fff 20px, #e6f7f9 60px, #eefafb 90%, #fff);
  overflow: hidden;
}

/* Title bar */
.titlebar { display: flex; align-items: flex-start; height: 24px; }
.qat {
  display: flex;
  align-items: center;
  gap: 4px;
  height: 19px;
  margin: 5px 0 0 31px;
  padding: 0 3px 0 7px;
  border: 1px solid #555;
  background: linear-gradient(#8d8d8d, #5c5c5c);
}
.qat svg { width: 14px; height: 12px; }
.with-caret { display: flex; align-items: center; gap: 3px; }
.more { padding-left: 1px; }
.title {
  flex: 1;
  display: flex;
  justify-content: center;
  gap: 16px;
  padding: 6px 0 0 15px;
  color: #111;
}
.info { display: flex; height: 19px; margin-top: 2px; border: 1px solid #555; background: #fff; }
.info-toggle { width: 10px; padding-left: 2px; background: linear-gradient(#8d8d8d, #5c5c5c); }
.info input { width: 144px; padding: 2px 2px 0; }
.info input::placeholder { color: #777; font-style: italic; opacity: 1; }
.info-icons { display: flex; align-items: center; gap: 5px; padding: 0 2px; background: linear-gradient(#8d8d8d, #5a5a5a); }
.info-icons svg { width: 14px; height: 14px; }
.controls {
  display: flex;
  margin: -1px 1px 0 16px;
  border: 1px solid #aab2b4;
  border-radius: 0 0 4px 4px;
  background: linear-gradient(#fff, #eef2f3);
}
.controls button { display: flex; justify-content: center; align-items: center; width: 22px; height: 16px; border-right: 1px solid #aab2b4; }
.controls button:last-child { width: 34px; border: 0; }
.controls svg { width: 12px; height: 10px; }
.app {
  position: absolute;
  left: 6px;
  top: 5px;
  z-index: 2;
  display: flex;
  align-items: center;
  gap: 1px;
  width: 33px;
  height: 34px;
  padding: 1px;
  border: 1px solid #777;
  background: linear-gradient(#b4b4b4, #7d7d7d 50%, #949494);
}
.app svg { width: 24px; height: 28px; }

/* Ribbon */
.tabs { display: flex; height: 17px; padding-left: 36px; background: #3c3c3c; color: #fff; font-weight: 600; }
.tabs button { padding: 3px 7px 0; }
.tabs .active { margin-top: 2px; padding-top: 1px; margin-right: 1px; border-radius: 2px 2px 0 0; background: linear-gradient(#fff, #e6e6e6); color: #444; font-weight: 400; }
.tabs .active { padding-left: 8px; padding-right: 8px; }
.tabs .pill { padding: 2px 0 0 17px; }
.pill span { display: flex; justify-content: center; align-items: center; width: 11px; height: 6px; border-radius: 2px; background: #fff; }
.ribbon {
  display: grid;
  grid-template-columns: 90fr 142fr 162fr 165fr 142fr 147fr 74fr 64fr;
  border-bottom: 5px solid #6b6b6b;
}
.panel { display: flex; flex-direction: column; min-width: 0; border: solid #b4b4b4; border-width: 0 1px 1px 0; }
.body {
  display: flex;
  justify-content: space-between;
  height: 62px;
  padding: 3px 2px 0 2px;
  background: linear-gradient(#e9e9e9, #f4f4f4 50%, #fbfbfb);
}
.panel h2 {
  position: relative;
  display: flex;
  justify-content: center;
  align-items: center;
  gap: 5px;
  height: 16px;
  border-top: 1px solid #d5d5d5;
  background: linear-gradient(#ececec, #e2e2e2);
}
.launch { position: absolute; right: 3px; bottom: 4px; width: 6px; height: 6px; }
.large { display: flex; flex: 1; flex-direction: column; align-items: center; justify-content: flex-start; gap: 2px; white-space: nowrap; }
.i28 { width: 28px; height: 28px; }
.large:not(.text) { padding-top: 1px; }
.large b { font: bold 30px/31px "Liberation Sans", sans-serif; }
.large.text { gap: 0; }
.last-line { display: flex; align-items: center; gap: 2px; }
.tools { display: grid; gap: 1px; align-content: start; }
.tools.two { grid-template-columns: 27px 18px; }
.tools.four { grid-template-columns: 18px 18px 18px 30px; }
.tools.one { grid-template-columns: 18px; }
.tools button, .strip button {
  display: flex;
  align-items: center;
  width: 18px;
  height: 18px;
  border: 1px solid #dcdcdc;
  background: #f9f9f9;
}
.tools .split { width: 26px; justify-content: space-between; padding-right: 2px; }
.four .split { justify-self: end; }
.list { display: flex; flex-direction: column; gap: 1px; }
.list button { display: flex; align-items: center; gap: 1px; height: 18px; white-space: nowrap; }
.far { margin-left: 5px; }
.stack { flex-direction: column; justify-content: flex-start; gap: 1px; padding: 3px 2px 0; }
.strip { display: flex; justify-content: space-between; }
.combo { position: relative; display: flex; align-items: center; flex: 1; height: 18px; border: 1px solid #d8d8d8; background: #f8f8f8; }
.stack > .combo { flex: none; }
.combo select { flex: 1; min-width: 0; width: 100%; height: 100%; padding: 0 14px 0 1px; appearance: none; }
.combo > .caret { position: absolute; right: 2px; top: 6px; }
.lead { display: flex; align-items: center; padding: 0 3px 0 0; }
.swatch { flex: none; width: 12px; height: 12px; border: 1px solid #333; background: #fff; }
.color { padding-left: 2px; }
.prop { display: flex; align-items: center; gap: 1px; }
.ruled::before { content: ""; flex: none; width: 48px; height: 1px; margin: 0 1px 0 3px; background: #444; }
.thick::before { height: 2px; background: #111; }

/* Drawing area */
.canvas { position: relative; flex: 1; min-height: 0; margin: 0 1px; background: #000; overflow: hidden; }
.drawing { width: 100%; height: 100%; }
.dyn { position: absolute; left: 356px; top: 271px; width: 27px; height: 15px; padding: 0 3px; background: linear-gradient(#2f8ae0, #2f8ae0) 3px 1px / 18px 13px no-repeat #fff; color: #fff; }
.tip { position: absolute; border: 1px solid #8c8cb4; background: #d3d3ee; color: #222; white-space: nowrap; }
.angle { left: 376px; top: 321px; width: 36px; padding: 1px 2px; }
.snap { left: 407px; top: 326px; padding: 1px 5px 1px 3px; }
.doc-controls { position: absolute; right: 8px; top: 7px; display: flex; gap: 7px; }
.doc-controls svg { width: 9px; height: 9px; }

/* Layout tabs */
.layouts { display: flex; height: 14px; margin: 0 1px; padding-left: 1px; background: #efefef; color: #111; font: 9px/12px "Liberation Sans", sans-serif; }
.nav { display: flex; align-items: center; justify-content: center; width: 12px; border-right: 1px solid #bbb; }
.nav svg { width: 8px; height: 8px; }
.sheet { position: relative; padding: 0 5px; }
.sheet::before { content: ""; position: absolute; inset: 0 1px; border-right: 1px solid #444; background: #f4f4f4; transform: skewX(-20deg); }
.sheet span { position: relative; }
.current { padding: 0 8px; color: #fff; }
.current::before { background: #000; transform: skewX(20deg); }

/* Command line */
.command { display: flex; border-top: 4px solid #6a6a6a; background: #fff; color: #222; font: 11px/13px "Liberation Mono", monospace; }
.grip { width: 11px; background: #a6a6a6; border-top: 3px dotted #666; }
.console { flex: 1; min-width: 0; }
.history { display: flex; justify-content: space-between; height: 40px; padding-left: 2px; border-bottom: 1px solid #bbb; }
.vscroll { display: flex; flex-direction: column; justify-content: space-between; align-items: center; width: 12px; padding: 5px 0; background: #f1f1f1; }
.prompt { display: flex; align-items: center; height: 14px; padding-left: 2px; white-space: nowrap; }
.prompt input { flex: 1; min-width: 0; height: 100%; }
.hscroll { display: flex; align-items: center; justify-content: space-between; width: 66px; height: 100%; padding: 0 20px 0 5px; background: #f1f1f1; }
.hscroll span { width: 12px; height: 12px; border: 1px solid #aaa; background: #e4e4e4; }

/* Status bar */
.status { display: flex; height: 18px; border-top: 1px solid #555; background: linear-gradient(#8c8c8c, #777); color: #111; font: 9px/16px "Liberation Sans", sans-serif; white-space: nowrap; }
.coords { width: 130px; padding-left: 9px; }
.space { flex: 1; }
.group { display: flex; margin-right: 7px; }
.group:last-child { margin-right: 14px; }
.group button { display: flex; align-items: center; justify-content: center; gap: 1px; width: 17px; border-right: 1px solid #777; background: linear-gradient(#b9b9b9, #a0a0a0); }
.toggles button { width: 18px; }
.group .wide { width: auto; padding: 0 1px; }
.group .on { background: linear-gradient(#d8eef7, #a3d3e6); }
.group .off svg { opacity: .4; }
.group .slim { width: 12px; background: none; }
.group .hw { width: 20px; }
.mark { position: absolute; right: 3px; bottom: 1px; color: #000; font: bold 11px/13px "Open Sans", sans-serif; text-shadow: 0 0 2px #fff; }
```
